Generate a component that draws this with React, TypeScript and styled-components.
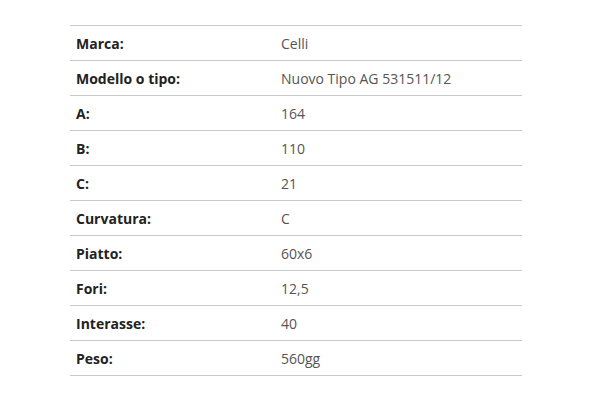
import React from "react";
import styled, { createGlobalStyle } from "styled-components";

const Global = createGlobalStyle`
  html, body { margin: 0; padding: 0; background: #fff; }
  body { font-family: "Open Sans", "Liberation Sans", sans-serif; }
`;

const Page = styled.div`
  padding: 25px 78px 0 70px;
`;

const Table = styled.div`
  width: 452px;
  border-top: 1px solid #c8c8c8;
`;

const Row = styled.div`
  display: grid;
  grid-template-columns: 211px 1fr;
  height: 34px;
  align-items: center;
  border-bottom: 1px solid #c8c8c8;
  font-size: 14px;
`;

const Label = styled.div`
  padding-left: 6px;
  font-weight: 700;
  color: #222;
`;

const Value = styled.div`
  color: #555;
`;

const rows: [string, string][] = [
  ["Marca:", "Celli"],
  ["Modello o tipo:", "Nuovo Tipo AG 531511/12"],
  ["A:", "164"],
  ["B:", "110"],
  ["C:", "21"],
  ["Curvatura:", "C"],
  ["Piatto:", "60x6"],
  ["Fori:", "12,5"],
  ["Interasse:", "40"],
  ["Peso:", "560gg"],
];

export default function App() {
  return (
    <>
      <Global />
      <Page>
        <Table>
          {rows.map(([l, v]) => (
            <Row key={l}>
              <Label>{l}</Label>
              <Value>{v}</Value>
            </Row>
          ))}
        </Table>
      </Page>
    </>
  );
}
